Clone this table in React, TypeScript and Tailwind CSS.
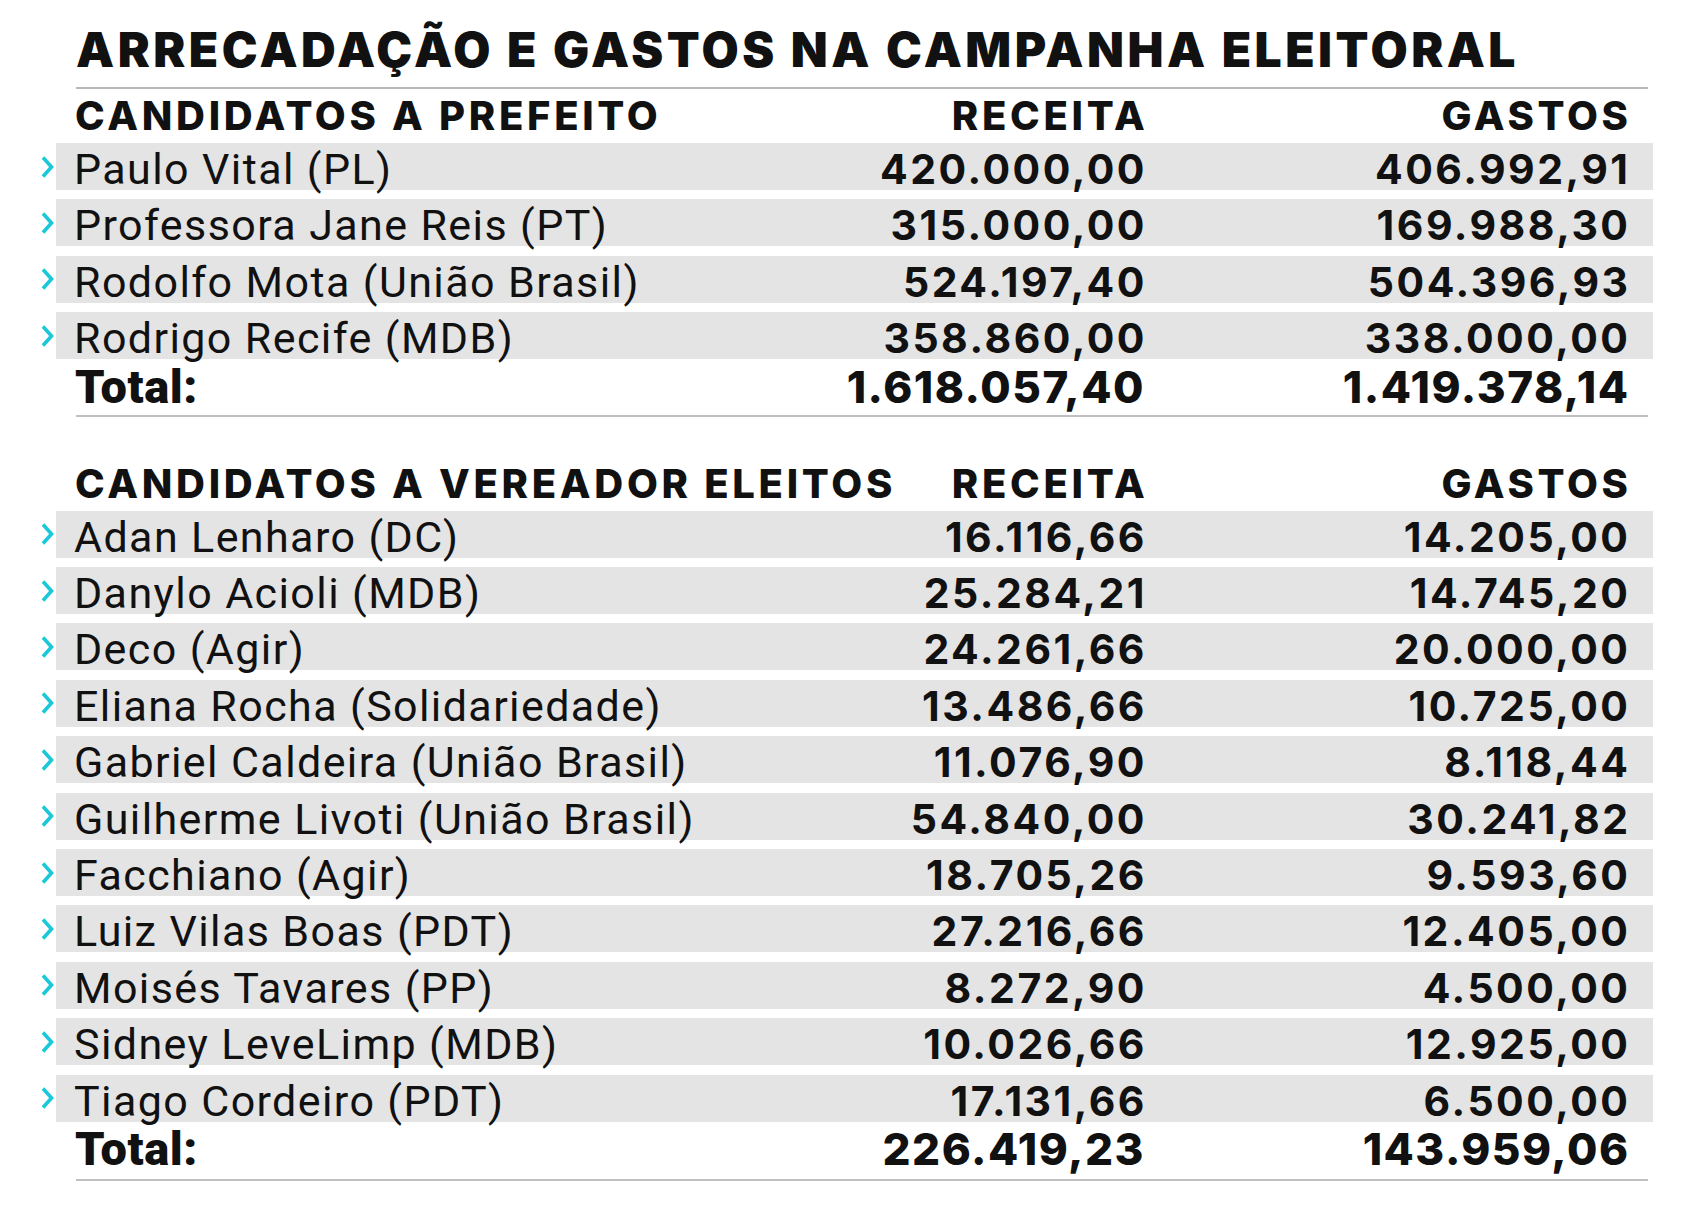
const PREFEITOS: [string, string, string][] = [
  ["Paulo Vital (PL)", "420.000,00", "406.992,91"],
  ["Professora Jane Reis (PT)", "315.000,00", "169.988,30"],
  ["Rodolfo Mota (União Brasil)", "524.197,40", "504.396,93"],
  ["Rodrigo Recife (MDB)", "358.860,00", "338.000,00"],
];

const VEREADORES: [string, string, string][] = [
  ["Adan Lenharo (DC)", "16.116,66", "14.205,00"],
  ["Danylo Acioli (MDB)", "25.284,21", "14.745,20"],
  ["Deco (Agir)", "24.261,66", "20.000,00"],
  ["Eliana Rocha (Solidariedade)", "13.486,66", "10.725,00"],
  ["Gabriel Caldeira (União Brasil)", "11.076,90", "8.118,44"],
  ["Guilherme Livoti (União Brasil)", "54.840,00", "30.241,82"],
  ["Facchiano (Agir)", "18.705,26", "9.593,60"],
  ["Luiz Vilas Boas (PDT)", "27.216,66", "12.405,00"],
  ["Moisés Tavares (PP)", "8.272,90", "4.500,00"],
  ["Sidney LeveLimp (MDB)", "10.026,66", "12.925,00"],
  ["Tiago Cordeiro (PDT)", "17.131,66", "6.500,00"],
];

const NAME_FONT = "font-['Roboto','Liberation_Sans',sans-serif]";
const NUM_FONT = "font-['Inter','Liberation_Sans',sans-serif]";

function Chevron() {
  return (
    <svg width="15" height="26" viewBox="0 0 15 26" className="block">
      <polyline points="3,3.5 11.5,13 3,22.5" fill="none" stroke="#1ac8da" strokeWidth="3.6" />
    </svg>
  );
}

function Row({ name, receita, gastos }: { name: string; receita: string; gastos: string }) {
  return (
    <div className="flex">
      <div className="flex w-[16px] items-center justify-start">
        <Chevron />
      </div>
      <div className="flex h-[47px] flex-1 items-baseline bg-[#e4e4e4] pl-[18px] pr-[25px] pt-[5px] leading-none text-[#111]">
        <span className={`flex-1 text-[43px] tracking-[1.4px] ${NAME_FONT}`}>{name}</span>
        <span className={`-mr-[2.5px] text-right text-[41px] font-bold tracking-[2.5px] ${NUM_FONT}`}>{receita}</span>
        <span className={`-mr-[2.5px] w-[486px] text-right text-[41px] font-bold tracking-[2.5px] ${NUM_FONT}`}>{gastos}</span>
      </div>
    </div>
  );
}

function Header({ label }: { label: string }) {
  return (
    <div className={`flex items-baseline pl-[35px] pr-[25px] leading-none text-[40px] font-extrabold tracking-[3.7px] text-[#111] ${NUM_FONT}`}>
      <span className="flex-1">{label}</span>
      <span className="-mr-[3.7px] text-right">RECEITA</span>
      <span className="-mr-[3.7px] w-[487px] text-right">GASTOS</span>
    </div>
  );
}

function Total({ receita, gastos }: { receita: string; gastos: string }) {
  return (
    <div className="flex items-baseline pl-[35px] pr-[25px] leading-none text-[#111]">
      <span className={`flex-1 text-[47px] font-black tracking-[0.6px] ${NAME_FONT}`}>Total:</span>
      <span className={`-mr-[1.5px] text-right text-[44px] font-extrabold tracking-[1.5px] ${NUM_FONT}`}>{receita}</span>
      <span className={`-mr-[1.5px] w-[486px] text-right text-[44px] font-extrabold tracking-[1.5px] ${NUM_FONT}`}>{gastos}</span>
    </div>
  );
}

export default function App() {
  return (
    <div className="min-h-[1208px] w-[1696px] bg-white pl-[40px] pr-[43px] pt-[26px]">
      <h1 className={`ml-[36px] text-[48px] font-black leading-none tracking-[3.5px] text-[#111] ${NUM_FONT}`}>
        ARRECADAÇÃO E GASTOS NA CAMPANHA ELEITORAL
      </h1>
      <div className="ml-[36px] mr-[5px] mt-[13px] h-[2px] bg-[#b8b8b8]" />

      <div className="mt-[6.5px]">
        <Header label="CANDIDATOS A PREFEITO" />
      </div>
      <div className="mt-[7.5px] flex flex-col gap-[9.4px]">
        {PREFEITOS.map(([n, r, g]) => (
          <Row key={n} name={n} receita={r} gastos={g} />
        ))}
      </div>
      <div className="mt-[3.5px]">
        <Total receita="1.618.057,40" gastos="1.419.378,14" />
      </div>
      <div className="ml-[36px] mr-[5px] mt-[5px] h-[2px] bg-[#c0c0c0]" />

      <div className="mt-[47.5px]">
        <Header label="CANDIDATOS A VEREADOR ELEITOS" />
      </div>
      <div className="mt-[6.5px] flex flex-col gap-[9.4px]">
        {VEREADORES.map(([n, r, g]) => (
          <Row key={n} name={n} receita={r} gastos={g} />
        ))}
      </div>
      <div className="mt-[3.5px]">
        <Total receita="226.419,23" gastos="143.959,06" />
      </div>
      <div className="ml-[36px] mr-[5px] mt-[7px] h-[2px] bg-[#c0c0c0]" />
    </div>
  );
}
